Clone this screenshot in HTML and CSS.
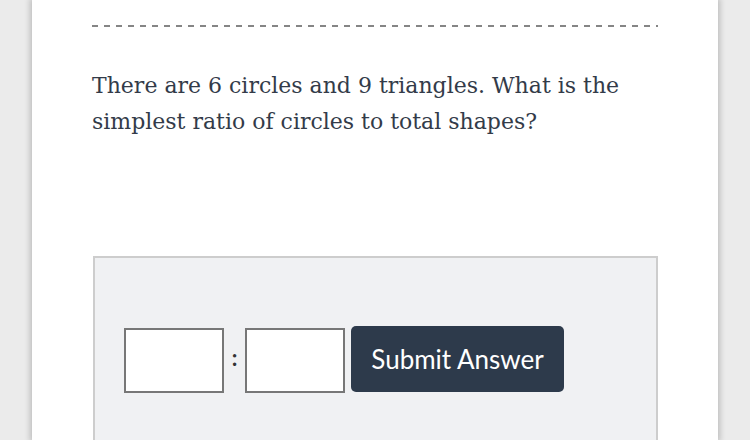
FILE: index.html
```
<!DOCTYPE html>
<html>
<head>
<meta charset="utf-8">
<link rel="stylesheet" href="styles.css">
</head>
<body>
<div class="card">
  <div class="dashed"></div>
  <p class="question">There are 6 circles and 9 triangles. What is the simplest ratio of circles to total shapes?</p>
  <div class="panel">
    <div class="row">
      <div class="box"></div>
      <span class="colon">:</span>
      <div class="box"></div>
      <button class="submit">Submit Answer</button>
    </div>
  </div>
</div>
</body>
</html>
```
FILE: styles.css
```
html, body {
  margin: 0;
  padding: 0;
  height: 440px;
  overflow: hidden;
}
body {
  background: #ebebeb;
}
.card {
  margin-left: 32px;
  width: 566px;
  height: 440px;
  padding: 0 60px;
  background: #fff;
  box-shadow: 0 0 6px 2px rgba(0,0,0,0.2);
  box-sizing: content-box;
  overflow: hidden;
}
.dashed {
  padding-top: 25px;
  height: 2px;
  background: repeating-linear-gradient(to right, #858585 0 6px, transparent 6px 12px) content-box;
}
.question {
  margin: 41px 0 0 0;
  font-family: "DejaVu Serif", Georgia, serif;
  font-size: 22px;
  line-height: 36px;
  color: #333b49;
}
.panel {
  margin-top: 116px;
  height: 200px;
  border: 2px solid #cdcdcd;
  background: #f0f1f3;
  padding: 68px 0 0 29px;
  box-sizing: border-box;
  margin-left: 1px;
}
.row {
  display: flex;
  align-items: flex-start;
}
.box {
  width: 100px;
  height: 65px;
  margin-top: 2px;
  border: 2px solid #777;
  background: #fff;
  box-sizing: border-box;
}
.colon {
  width: 21px;
  margin-top: 18px;
  text-align: center;
  font-family: "Lato", sans-serif;
  font-size: 22px;
  font-weight: bold;
  color: #333;
}
.submit {
  margin-left: 6px;
  width: 213px;
  height: 66px;
  border: none;
  border-radius: 5px;
  background: #2d3a4b;
  color: #fff;
  font-family: "Lato", sans-serif;
  font-size: 26px;
  padding: 0;
}
```
